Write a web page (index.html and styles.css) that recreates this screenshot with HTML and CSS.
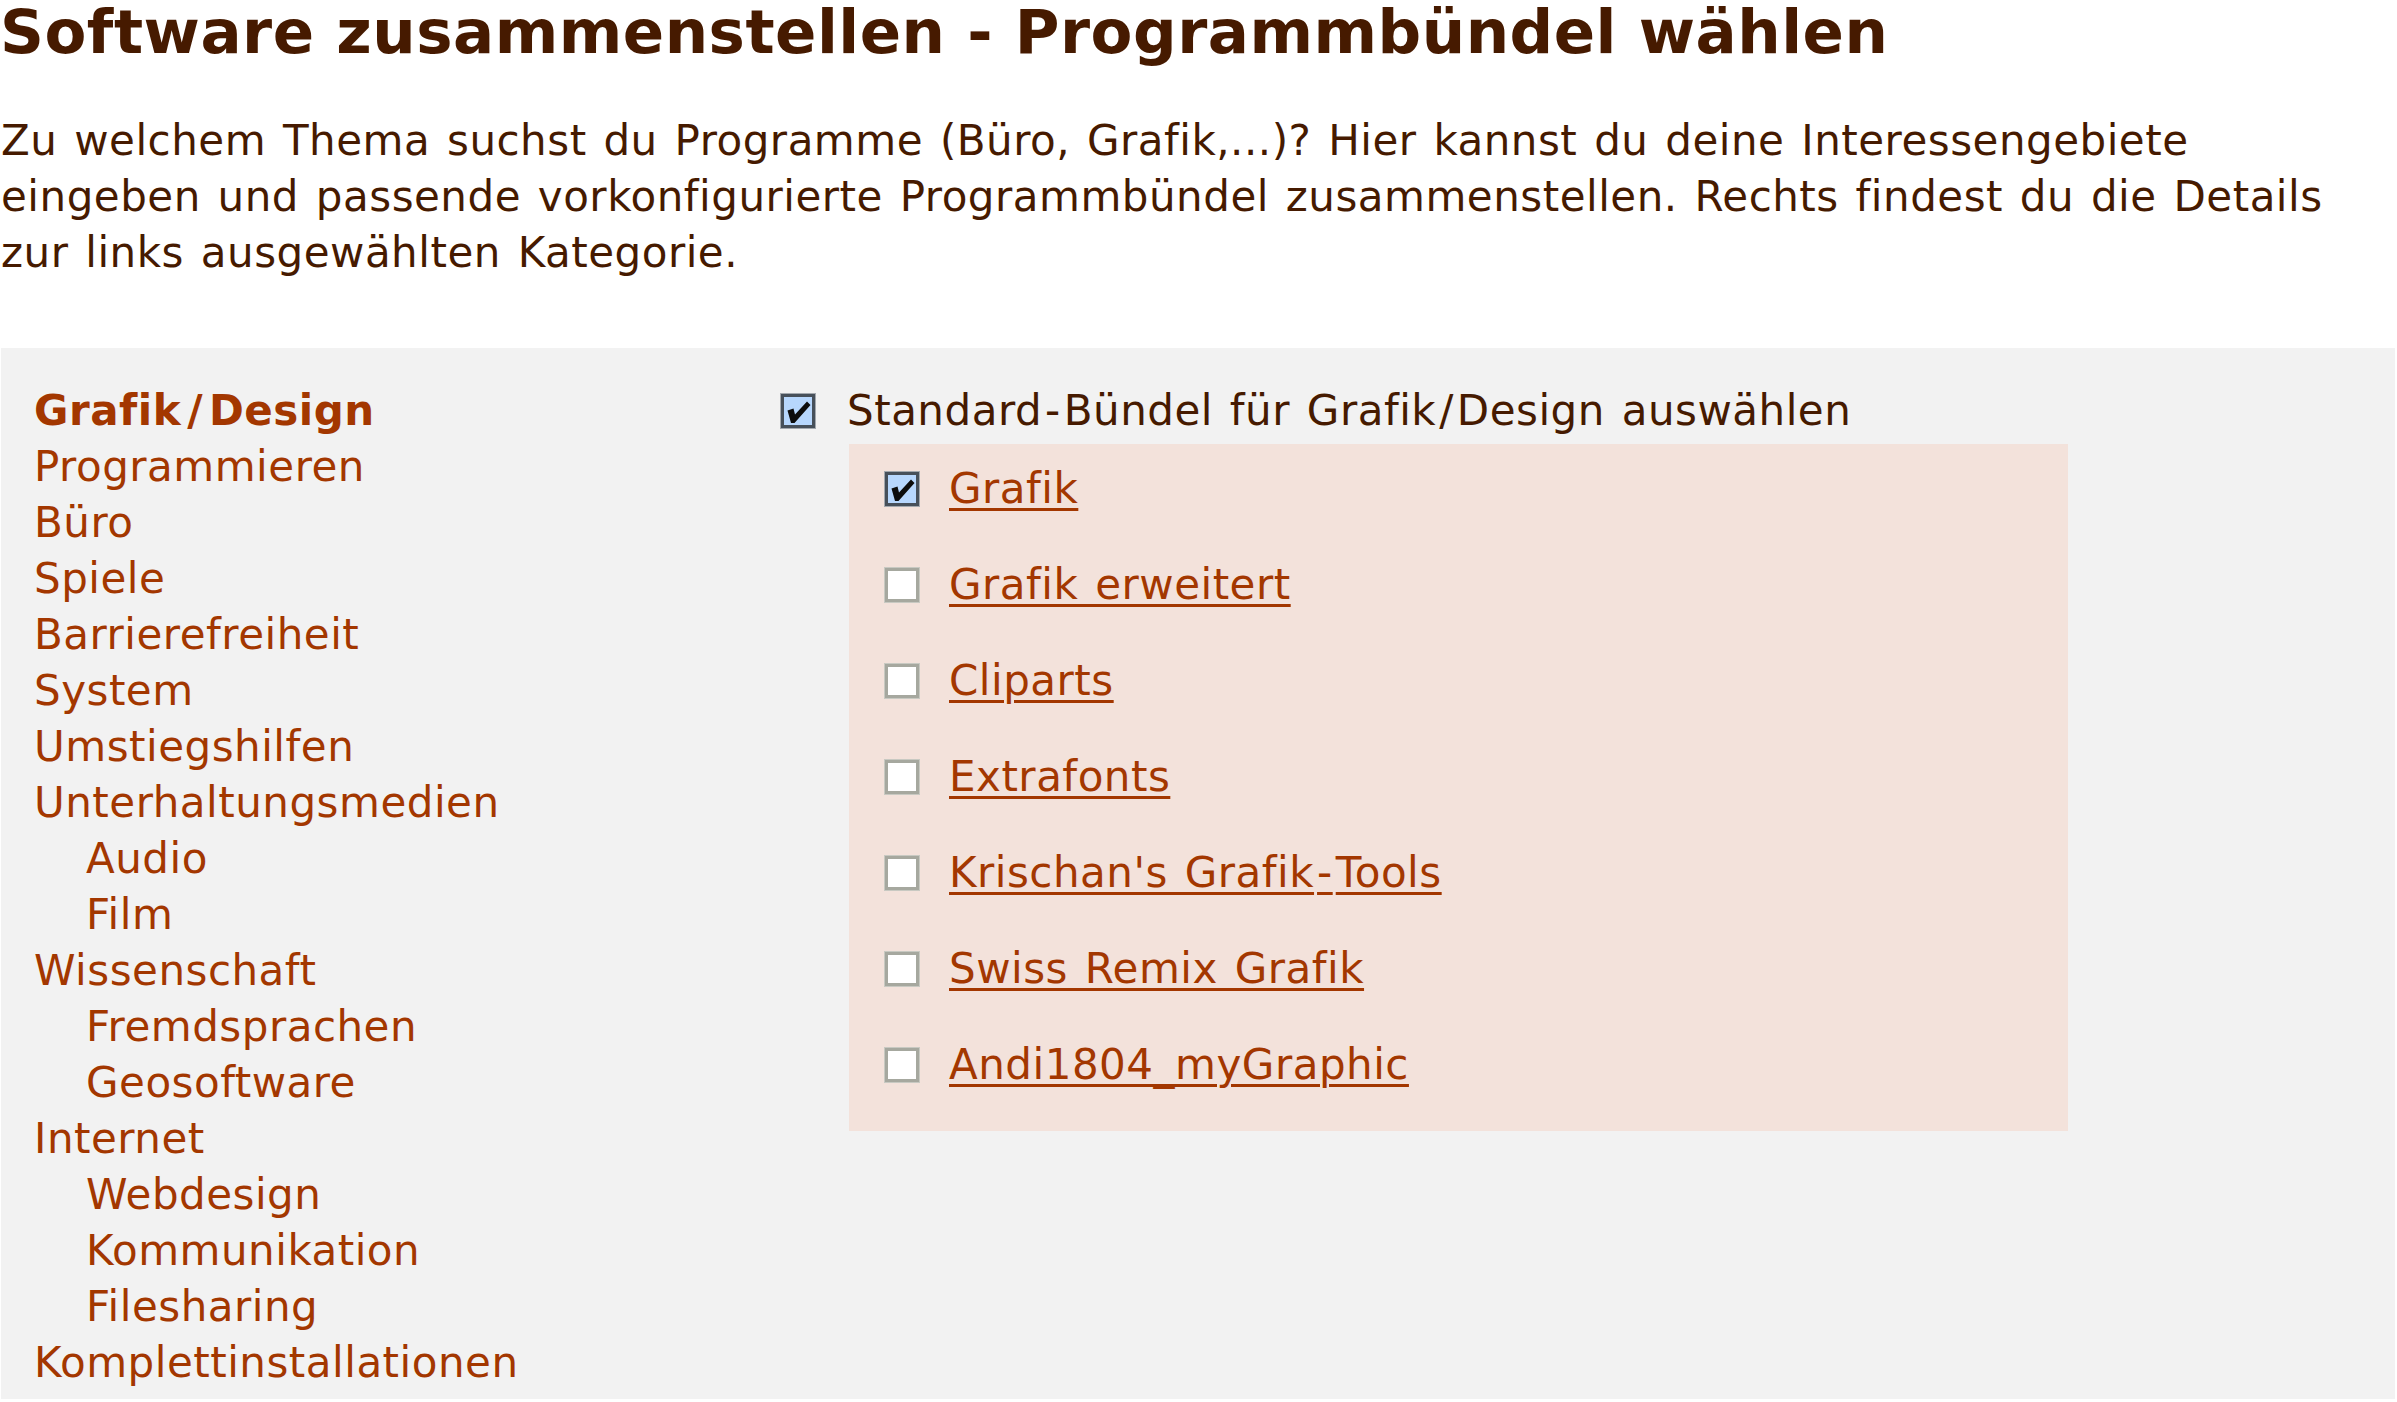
FILE: index.html
```html
<!DOCTYPE html>
<html lang="de">
<head>
<meta charset="utf-8">
<title>Software zusammenstellen - Programmbündel wählen</title>
<link rel="stylesheet" href="styles.css">
</head>
<body>
<h1 class="title">Software zusammenstellen - Programmbündel wählen</h1>
<p class="intro">Zu welchem Thema suchst du Programme (Büro, Grafik,...)? Hier kannst du deine Interessengebiete eingeben und passende vorkonfigurierte Programmbündel zusammenstellen. Rechts findest du die Details zur links ausgewählten Kategorie.</p>

<div class="panel">
  <ul class="cats">
    <li class="cat active"><a href="#">Grafik<span class="sep">/</span>Design</a></li>
    <li class="cat"><a href="#">Programmieren</a></li>
    <li class="cat"><a href="#">Büro</a></li>
    <li class="cat"><a href="#">Spiele</a></li>
    <li class="cat"><a href="#">Barrierefreiheit</a></li>
    <li class="cat"><a href="#">System</a></li>
    <li class="cat"><a href="#">Umstiegshilfen</a></li>
    <li class="cat"><a href="#">Unterhaltungsmedien</a></li>
    <li class="cat sub"><a href="#">Audio</a></li>
    <li class="cat sub"><a href="#">Film</a></li>
    <li class="cat"><a href="#">Wissenschaft</a></li>
    <li class="cat sub"><a href="#">Fremdsprachen</a></li>
    <li class="cat sub"><a href="#">Geosoftware</a></li>
    <li class="cat"><a href="#">Internet</a></li>
    <li class="cat sub"><a href="#">Webdesign</a></li>
    <li class="cat sub"><a href="#">Kommunikation</a></li>
    <li class="cat sub"><a href="#">Filesharing</a></li>
    <li class="cat"><a href="#">Komplettinstallationen</a></li>
  </ul>

  <div class="details">
    <div class="std">
      <svg class="box" viewBox="0 0 36 36" width="36" height="36"><rect x="0.5" y="0.5" width="35" height="35" fill="none" stroke="#a3a8ae" stroke-width="1"/><rect x="2.5" y="2.5" width="31" height="31" fill="#b7d7fd" stroke="#47505a" stroke-width="3"/><path d="M7.5 17.5 L13.5 15.5 L15 21.5 L27 8.5 L30.5 12 L14.5 30 L11 30 Z" fill="#0d0d0d"/></svg>
      <span class="std-label">Standard<span class="sep">-</span>Bündel für Grafik<span class="sep">/</span>Design auswählen</span>
    </div>
    <ul class="bundles">
      <li class="bundle">
        <svg class="box" viewBox="0 0 36 36" width="36" height="36"><rect x="0.5" y="0.5" width="35" height="35" fill="none" stroke="#a3a8ae" stroke-width="1"/><rect x="2.5" y="2.5" width="31" height="31" fill="#b7d7fd" stroke="#47505a" stroke-width="3"/><path d="M7.5 17.5 L13.5 15.5 L15 21.5 L27 8.5 L30.5 12 L14.5 30 L11 30 Z" fill="#0d0d0d"/></svg>
        <a href="#">Grafik</a>
      </li>
      <li class="bundle">
        <svg class="box" viewBox="0 0 36 36" width="36" height="36"><rect x="0.5" y="0.5" width="35" height="35" fill="none" stroke="#c8c9c2" stroke-width="1"/><rect x="2.5" y="2.5" width="31" height="31" fill="#fff" stroke="#a6a89f" stroke-width="3"/></svg>
        <a href="#">Grafik erweitert</a>
      </li>
      <li class="bundle">
        <svg class="box" viewBox="0 0 36 36" width="36" height="36"><rect x="0.5" y="0.5" width="35" height="35" fill="none" stroke="#c8c9c2" stroke-width="1"/><rect x="2.5" y="2.5" width="31" height="31" fill="#fff" stroke="#a6a89f" stroke-width="3"/></svg>
        <a href="#">Cliparts</a>
      </li>
      <li class="bundle">
        <svg class="box" viewBox="0 0 36 36" width="36" height="36"><rect x="0.5" y="0.5" width="35" height="35" fill="none" stroke="#c8c9c2" stroke-width="1"/><rect x="2.5" y="2.5" width="31" height="31" fill="#fff" stroke="#a6a89f" stroke-width="3"/></svg>
        <a href="#">Extrafonts</a>
      </li>
      <li class="bundle">
        <svg class="box" viewBox="0 0 36 36" width="36" height="36"><rect x="0.5" y="0.5" width="35" height="35" fill="none" stroke="#c8c9c2" stroke-width="1"/><rect x="2.5" y="2.5" width="31" height="31" fill="#fff" stroke="#a6a89f" stroke-width="3"/></svg>
        <a href="#">Krischan's Grafik<span class="sep">-</span>Tools</a>
      </li>
      <li class="bundle">
        <svg class="box" viewBox="0 0 36 36" width="36" height="36"><rect x="0.5" y="0.5" width="35" height="35" fill="none" stroke="#c8c9c2" stroke-width="1"/><rect x="2.5" y="2.5" width="31" height="31" fill="#fff" stroke="#a6a89f" stroke-width="3"/></svg>
        <a href="#">Swiss Remix Grafik</a>
      </li>
      <li class="bundle">
        <svg class="box" viewBox="0 0 36 36" width="36" height="36"><rect x="0.5" y="0.5" width="35" height="35" fill="none" stroke="#c8c9c2" stroke-width="1"/><rect x="2.5" y="2.5" width="31" height="31" fill="#fff" stroke="#a6a89f" stroke-width="3"/></svg>
        <a href="#">Andi1804_myGraphic</a>
      </li>
    </ul>
  </div>
</div>
</body>
</html>
```

FILE: styles.css
```css
html, body {
  margin: 0;
  padding: 0;
  background: #ffffff;
}

body {
  font-family: "DejaVu Sans", Verdana, sans-serif;
  font-size: 42px;
  line-height: 56px;
  color: #461a00;
  letter-spacing: 0.5px;
  word-spacing: 3px;
}

.title {
  margin: 0;
  padding-top: 2px;
  font-size: 61px;
  line-height: 60px;
  font-weight: bold;
  letter-spacing: 0.5px;
  word-spacing: 0;
  color: #461a00;
  white-space: nowrap;
}

.intro {
  margin: 51px 0 0 1px;
}

.sep {
  margin: 0 3px;
}

.cat .sep {
  margin: 0 6px;
}

.panel {
  margin: 67px 2px 0 1px;
  height: 1051px;
  box-sizing: border-box;
  padding: 35px 0 0 33px;
  background: #f2f2f2;
  display: flex;
  align-items: flex-start;
}

.cats {
  list-style: none;
  margin: 0;
  padding: 0;
  width: 746px;
  flex: none;
}

.cat a {
  color: #a33700;
  text-decoration: none;
}

.cat.active a {
  font-weight: bold;
}

.cat.sub {
  padding-left: 52px;
}

.details {
  display: flex;
  flex-direction: column;
}

.std {
  display: flex;
  align-items: center;
  gap: 31px;
  color: #461a00;
}

.box {
  flex: none;
  display: block;
}

.bundles {
  list-style: none;
  margin: 5px 0 0 69px;
  padding: 0 0 15px 35px;
  width: 1184px;
  background: #f3e2db;
}

.bundle {
  display: flex;
  align-items: center;
  gap: 29px;
  padding: 17px 0 23px;
}

.bundle a {
  color: #a33700;
  text-decoration: underline;
  text-decoration-thickness: 3px;
  text-underline-offset: 5px;
}
```
